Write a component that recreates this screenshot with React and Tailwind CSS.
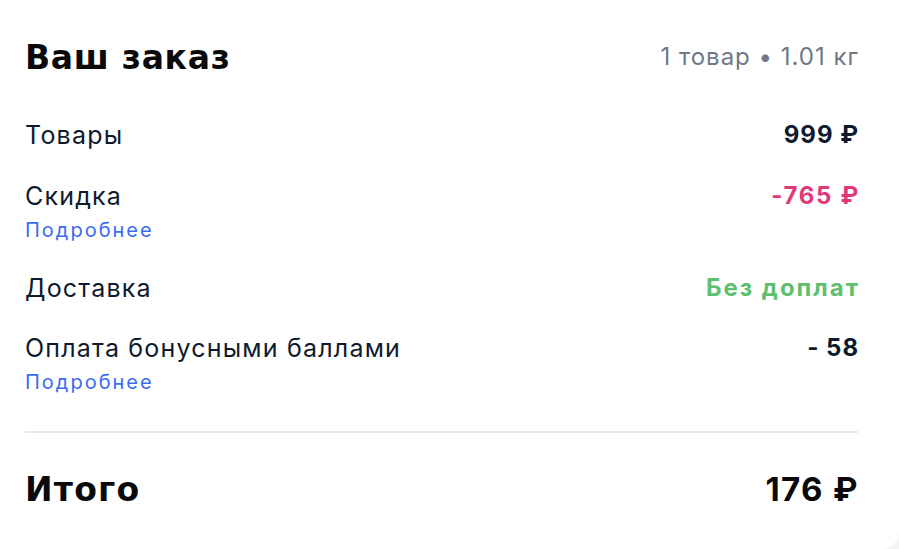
export default function App() {
  const label = 'text-[25px] leading-[30px] tracking-[1.2px] text-[#0e1a2e]'
  const value = 'text-[24px] leading-[30px] font-bold'
  const more = 'mt-[7px] text-[20px] leading-[24px] tracking-[2px] text-[#3b6cf2]'
  const heading = "pt-[2px] font-['DejaVu_Sans',sans-serif] text-[33px] leading-[38px] font-bold text-[#0a0a0a]"

  return (
    <div className="min-h-[549px] bg-[#f4f5f7] font-['Inter',sans-serif]">
      <div className="h-[549px] rounded-br-[18px] bg-white">
        <div className="ml-[25px] w-[833px] pt-[37px]">
          {/* Header */}
          <div className="flex items-center justify-between">
            <h1 className={`${heading} tracking-[0.7px]`}>Ваш заказ</h1>
            <span className="-mr-[1px] text-[24px] leading-[30px] tracking-[1px] text-[#6e7886]">1 товар • 1.01 кг</span>
          </div>

          {/* Rows */}
          <div className="mt-[43px] flex justify-between">
            <span className={label}>Товары</span>
            <span className={`${value} -mr-[1px] tracking-[1px] text-[#0e1a2e]`}>999 ₽</span>
          </div>

          <div className="mt-[31px] flex justify-between">
            <div className="flex flex-col items-start">
              <span className={label}>Скидка</span>
              <a className={more}>Подробнее</a>
            </div>
            <span className={`${value} -mr-[2px] tracking-[1.7px] text-[#e2387b]`}>-765 ₽</span>
          </div>

          <div className="mt-[31px] flex justify-between">
            <span className={label}>Доставка</span>
            <span className={`${value} -mr-[2px] tracking-[2px] text-[#5ebf6e]`}>Без доплат</span>
          </div>

          <div className="mt-[30px] flex justify-between">
            <div className="flex flex-col items-start">
              <span className={label}>Оплата бонусными баллами</span>
              <a className={more}>Подробнее</a>
            </div>
            <span className={`${value} -mr-[1px] tracking-[1px] text-[#0e1a2e]`}>- 58</span>
          </div>

          <div className="mt-[37px] h-[2px] bg-[#e3e8f1]" />

          {/* Total */}
          <div className="mt-[36px] flex items-center justify-between">
            <span className={`${heading} tracking-[1.2px]`}>Итого</span>
            <span className="-mr-[1px] text-[33px] leading-[40px] font-bold tracking-[1.4px] text-[#0a0a0a]">176 ₽</span>
          </div>
        </div>
      </div>
    </div>
  )
}
